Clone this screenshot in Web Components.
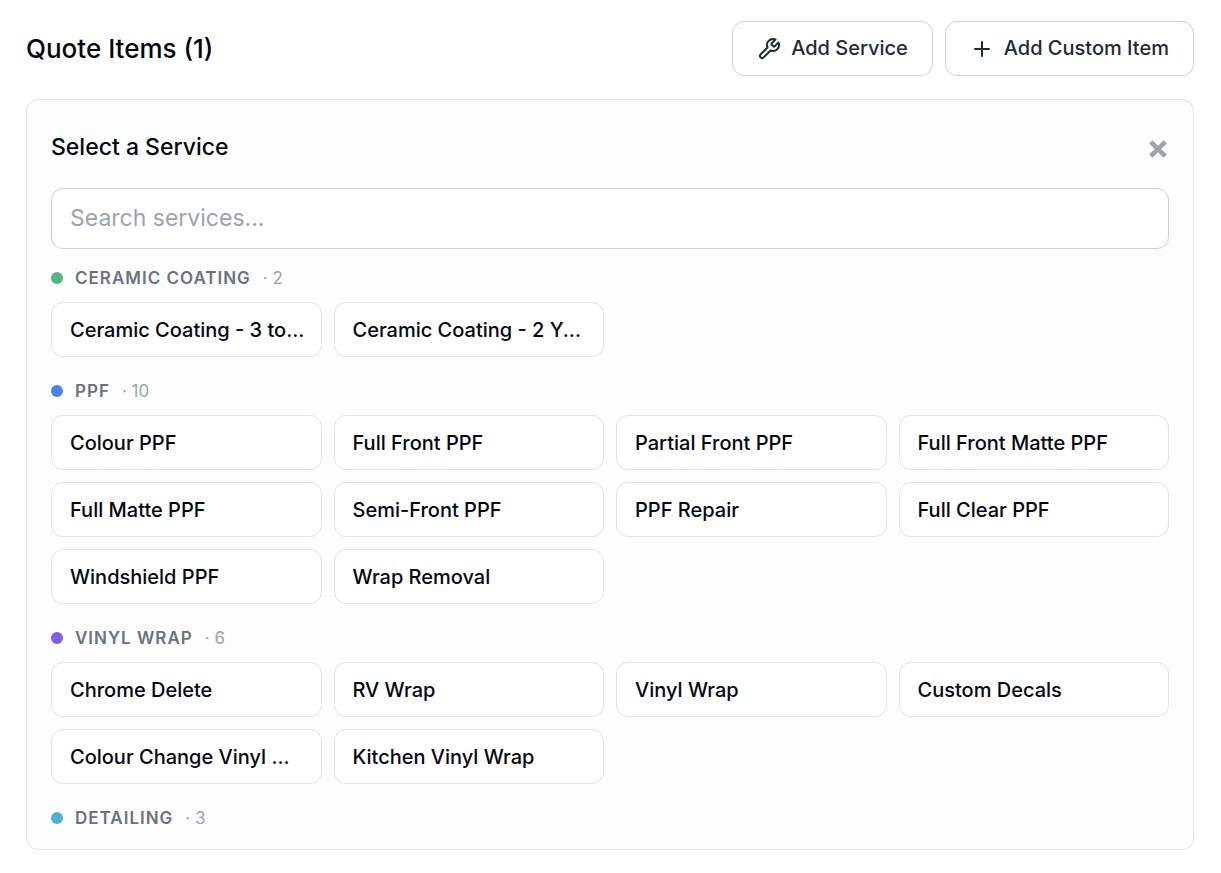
<!DOCTYPE html>
<html lang="en">
<head>
<meta charset="utf-8">
<meta name="viewport" content="width=device-width, initial-scale=1">
<title>Quote Items</title>
<style>
    body{
        margin: 0;
        padding: 21px 27px 23px 26px;
        background-color: #ffffff;
        color: #030712;
        font-family: Inter, "Liberation Sans", sans-serif;
    }
</style>
</head>
<body>
<quote-items count="1"></quote-items>

<script>
const Services = [
    {name:"Ceramic Coating", color:"#52b385", total:2, items:["Ceramic Coating - 3 to...","Ceramic Coating - 2 Y..."]},
    {name:"PPF", color:"#4c80f1", total:10, items:["Colour PPF","Full Front PPF","Partial Front PPF","Full Front Matte PPF","Full Matte PPF","Semi-Front PPF","PPF Repair","Full Clear PPF","Windshield PPF","Wrap Removal"]},
    {name:"Vinyl Wrap", color:"#825ced", total:6, items:["Chrome Delete","RV Wrap","Vinyl Wrap","Custom Decals","Colour Change Vinyl ...","Kitchen Vinyl Wrap"]},
    {name:"Detailing", color:"#4fb0d0", total:3, items:[]}
];

class OutlineButton extends HTMLElement{
    constructor(){
        super();
        this.selector = this.attachShadow({mode:"open"})
    }

    connectedCallback(){
        this.selector.innerHTML=`
            <style>
            :host{
                display: block;
            }
            button{
                display: flex;
                align-items: center;
                gap: 10px;
                padding: 11px 24px;
                border: 1px solid #cdd1d9;
                border-radius: 12px;
                background-color: #ffffff;
                color: #1f2937;
                font: 500 20px/31px Inter, "Liberation Sans", sans-serif;
                white-space: nowrap;
                cursor: pointer;
            }
            button:hover{
                background-color: #f9fafb;
            }
            </style>
            <button type="button"><slot name="icon"></slot><span><slot></slot></span></button>
        `;
    }
}
customElements.define("outline-button",OutlineButton);

class ServiceChip extends HTMLElement{
    constructor(){
        super();
        this.selector = this.attachShadow({mode:"open"})
    }

    connectedCallback(){
        this.selector.innerHTML=`
            <style>
            :host{
                display: block;
                min-width: 0;
            }
            button{
                display: block;
                width: 100%;
                box-sizing: border-box;
                padding: 12px 12px 10px 18px;
                border: 1px solid #e2e4e9;
                border-radius: 12px;
                background-color: #ffffff;
                color: #030712;
                font: 500 20px/31px Inter, "Liberation Sans", sans-serif;
                text-align: left;
                white-space: nowrap;
                overflow: hidden;
                text-overflow: ellipsis;
                cursor: pointer;
            }
            button:hover{
                border-color: #9ca3af;
            }
            </style>
            <button type="button"><slot></slot></button>
        `;
    }
}
customElements.define("service-chip",ServiceChip);

class ServiceGroup extends HTMLElement{
    constructor(){
        super();
        this.selector = this.attachShadow({mode:"open"})
    }

    get name(){
        return this.getAttribute("name");
    }

    get color(){
        return this.getAttribute("color");
    }

    get total(){
        return this.getAttribute("total");
    }

    connectedCallback(){
        this.selector.innerHTML=`
            <style>
            :host{
                display: block;
            }
            header{
                display: flex;
                align-items: center;
                gap: 12px;
                font-size: 17px;
                line-height: 24px;
            }
            .dot{
                height: 12px;
                width: 12px;
                border-radius: 100%;
                background-color: ${this.color};
            }
            h4{
                margin: 0;
                font-size: 17px;
                font-weight: 600;
                letter-spacing: 1px;
                text-transform: uppercase;
                color: #6b7280;
            }
            .total{
                color: #9ca3af;
            }
            .grid{
                display: grid;
                grid-template-columns: repeat(4, minmax(0, 1fr));
                gap: 12px;
                margin-top: 12px;
            }
            </style>
            <header><span class="dot"></span><h4>${this.name}</h4><span class="total">· ${this.total}</span></header>
            ${this.children.length ? '<div class="grid"><slot></slot></div>' : ''}
        `;
    }
}
customElements.define("service-group",ServiceGroup);

class ServicePicker extends HTMLElement{
    constructor(){
        super();
        this.selector = this.attachShadow({mode:"open"})
    }

    Groups(){
        return Services.map(group => `
            <service-group name="${group.name}" color="${group.color}" total="${group.total}">${
                group.items.map(item => `<service-chip>${item}</service-chip>`).join("")
            }</service-group>`).join("");
    }

    connectedCallback(){
        this.selector.innerHTML=`
            <style>
            :host{
                display: block;
                padding: 24px 24px 19px;
                border: 1px solid #e2e4e9;
                border-radius: 12px;
                background-color: #fbfefd;
            }
            .title{
                display: flex;
                align-items: flex-start;
                justify-content: space-between;
                margin-bottom: 16px;
            }
            h3{
                margin: 0;
                font-size: 23px;
                font-weight: 500;
                line-height: 46px;
            }
            .close{
                display: flex;
                padding: 16px 2px 14px;
                border: 0;
                background: none;
                color: #9ca3af;
                cursor: pointer;
            }
            input{
                display: block;
                width: 100%;
                box-sizing: border-box;
                padding: 12px 18px;
                border: 1px solid #cdd1d9;
                border-radius: 12px;
                background-color: #ffffff;
                color: #030712;
                font: 400 23px/35px Inter, "Liberation Sans", sans-serif;
                outline: none;
            }
            input::placeholder{
                color: #9ca3af;
                opacity: 1;
            }
            .groups{
                display: grid;
                gap: 22px;
                margin-top: 17px;
            }
            </style>
            <div class="title">
                <h3>Select a Service</h3>
                <button class="close" type="button" aria-label="Close">
                    <svg width="18" height="18" viewBox="0 0 18 18" fill="none" stroke="currentColor" stroke-width="4.6"><path d="M1.8 1.8 16.2 16.2M16.2 1.8 1.8 16.2"/></svg>
                </button>
            </div>
            <input type="text" placeholder="Search services..." aria-label="Search services">
            <div class="groups">${this.Groups()}</div>
        `;
    }
}
customElements.define("service-picker",ServicePicker);

class QuoteItems extends HTMLElement{
    constructor(){
        super();
        this.selector = this.attachShadow({mode:"open"})
    }

    get count(){
        return this.getAttribute("count");
    }

    connectedCallback(){
        this.selector.innerHTML=`
            <style>
            :host{
                display: block;
            }
            header{
                display: flex;
                align-items: center;
                justify-content: space-between;
                margin-bottom: 23px;
            }
            h2{
                margin: 0;
                font-size: 26px;
                font-weight: 500;
                line-height: 40px;
            }
            .actions{
                display: flex;
                gap: 12px;
            }
            svg{
                display: block;
                fill: none;
                stroke: currentColor;
                stroke-linecap: round;
                stroke-linejoin: round;
            }
            </style>
            <header>
                <h2>Quote Items (${this.count})</h2>
                <div class="actions">
                    <outline-button>
                        <svg slot="icon" width="24" height="24" viewBox="0 0 24 24" stroke-width="2"><path d="M14.7 6.3a1 1 0 0 0 0 1.4l1.6 1.6a1 1 0 0 0 1.4 0l3.77-3.77a6 6 0 0 1-7.94 7.94l-6.91 6.91a2.12 2.12 0 0 1-3-3l6.91-6.91a6 6 0 0 1 7.94-7.94l-3.76 3.76z"/></svg>
                        Add Service
                    </outline-button>
                    <outline-button>
                        <svg slot="icon" width="24" height="24" viewBox="0 0 24 24" stroke-width="2"><path d="M5 12h14M12 5v14"/></svg>
                        Add Custom Item
                    </outline-button>
                </div>
            </header>
            <service-picker></service-picker>
        `;
    }
}
customElements.define("quote-items",QuoteItems);
</script>
</body>
</html>
